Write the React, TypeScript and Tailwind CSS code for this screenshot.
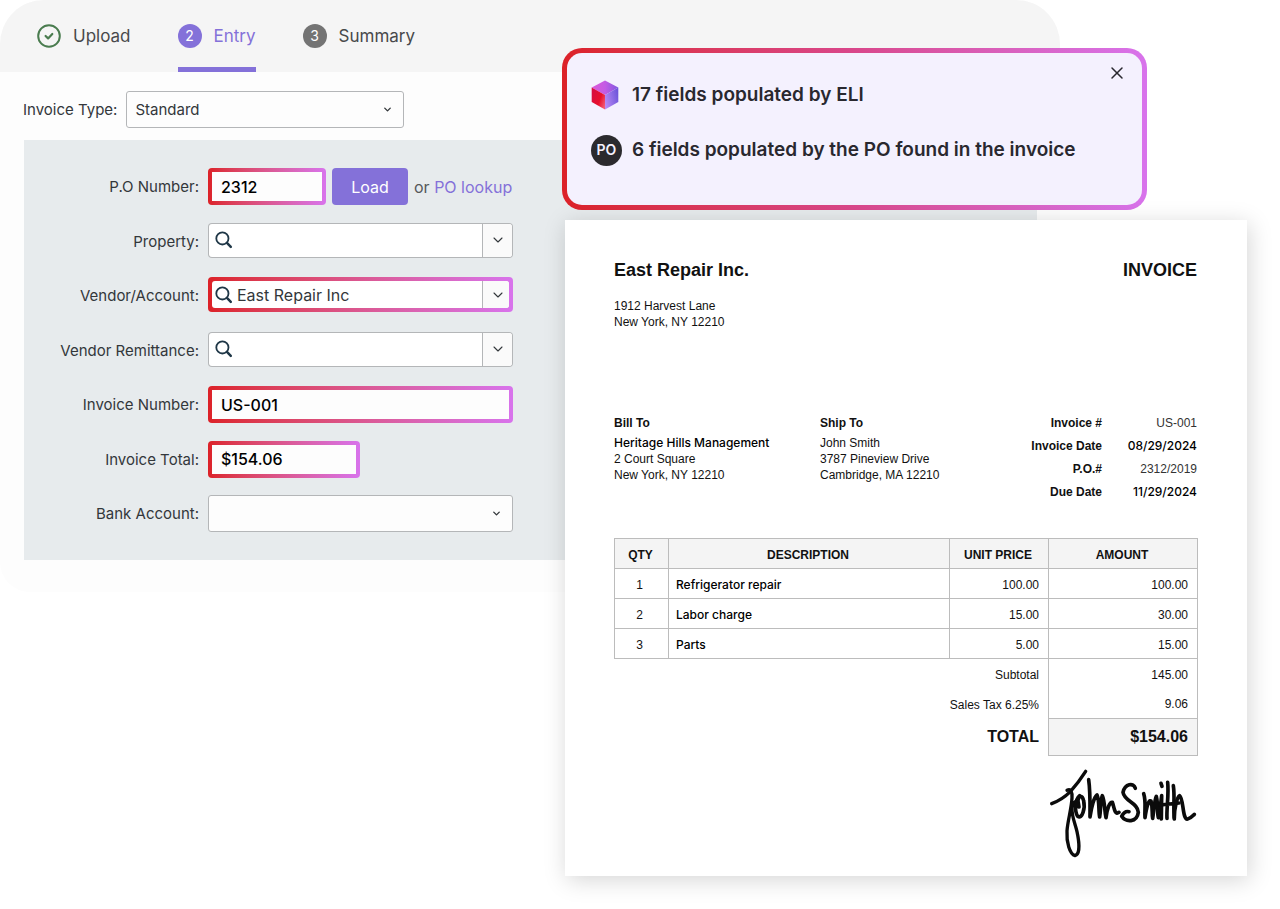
import type { ReactNode } from "react";
import { ChevronDown, X } from "lucide-react";

type FieldProps = { label: string; htmlFor: string; children: ReactNode };

function FormRow({ label, htmlFor, children }: FieldProps) {
  return (
    <div className="flex h-[37px] items-start gap-[9px]">
      <label htmlFor={htmlFor} className="w-[175px] shrink-0 self-center pt-0.5 text-right text-[15px] text-[#33373b]">
        {label}
      </label>
      {children}
    </div>
  );
}

function GradientInput({ id, value, width }: { id: string; value: string; width: string }) {
  return (
    <div className={`h-[37px] rounded bg-gradient-to-r from-[#dc2127] to-[#d873ec] p-1 ${width}`}>
      <input
        id={id}
        defaultValue={value}
        className="h-full w-full bg-[#fdfdfd] px-[9px] text-base font-medium text-black outline-none"
      />
    </div>
  );
}

function SearchIcon() {
  return (
    <svg viewBox="0 0 18 18" className="size-[18px] shrink-0" fill="none" stroke="#1f3747" strokeLinecap="round">
      <circle cx="7.4" cy="7.4" r="6.1" strokeWidth="1.8" />
      <path d="M12.2 12.2 15.8 15.8" strokeWidth="2.5" />
    </svg>
  );
}

function LookupField({ id, value, highlighted }: { id: string; value?: string; highlighted?: boolean }) {
  const frame = highlighted
    ? "bg-gradient-to-r from-[#dc2127] to-[#d873ec] p-1"
    : "bg-[#b4b6b8] p-px";
  const inset = highlighted ? "pl-[3px]" : "pl-1.5";
  const button = highlighted ? "w-[27px] pl-[3px]" : "w-[30px]";
  return (
    <div className={`h-[35px] w-[305px] rounded ${frame}`}>
      <div className="flex h-full overflow-hidden rounded-[3px] bg-white">
        <div className={`flex min-w-0 flex-1 items-center gap-1 ${inset}`}>
          <SearchIcon />
          <input id={id} defaultValue={value} className="w-full min-w-0 bg-transparent text-base text-[#33373b] outline-none" />
        </div>
        <button type="button" aria-label="Show options" className={`flex items-center justify-center border-l border-[#b4b6b8] bg-[#fafafa] ${button}`}>
          <ChevronDown className="size-4 text-[#33373b]" strokeWidth={1.6} />
        </button>
      </div>
    </div>
  );
}

function SelectBox({ id, options, width }: { id: string; options: string[]; width: string }) {
  return (
    <div className={`relative ${width}`}>
      <select
        id={id}
        className="h-[37px] w-full appearance-none rounded-[3px] border border-[#b4b6b8] bg-[#fdfdfd] px-2 pt-0.5 text-[15px] text-[#33373b] outline-none"
      >
        {options.map((option) => (
          <option key={option}>{option}</option>
        ))}
      </select>
      <ChevronDown className="pointer-events-none absolute top-[13px] right-[11px] size-[11px] text-[#33373b]" strokeWidth={3} />
    </div>
  );
}

function Steps() {
  return (
    <nav className="flex h-[72px] gap-[47px] bg-[#f5f5f5] pl-[37px] text-[17px] text-[#48494b]">
      <a href="#upload" className="flex items-center gap-3">
        <svg viewBox="0 0 24 24" className="size-6" fill="none" stroke="#4a7c4f" strokeLinecap="round" strokeLinejoin="round">
          <circle cx="12" cy="12" r="10.8" strokeWidth="2" />
          <path d="m8.6 12 2.5 2.4 4.2-4.4" strokeWidth="2.2" />
        </svg>
        <span className="pt-0.5">Upload</span>
      </a>
      <a href="#entry" aria-current="step" className="flex items-center gap-3 border-y-[5px] border-t-transparent border-b-[#8471d9] text-[#8471d9]">
        <span className="flex size-6 items-center justify-center rounded-full bg-[#8471d9] text-sm text-white">2</span>
        <span className="pt-0.5">Entry</span>
      </a>
      <a href="#summary" className="flex items-center gap-3">
        <span className="flex size-6 items-center justify-center rounded-full bg-[#747474] text-sm text-white">3</span>
        <span className="pt-0.5">Summary</span>
      </a>
    </nav>
  );
}

function EntryWindow() {
  return (
    <section className="z-0 col-span-2 col-start-1 row-start-1 self-start overflow-hidden rounded-t-[44px] rounded-b-[30px] bg-[#fdfdfd] pb-8">
      <Steps />
      <div className="flex items-center gap-[9px] pt-[19px] pb-3 pl-[23px]">
        <label htmlFor="invoice-type" className="pt-0.5 text-[15px] text-[#33373b]">Invoice Type:</label>
        <SelectBox id="invoice-type" options={["Standard"]} width="w-[278px]" />
      </div>
      <form className="mr-[23px] ml-6 flex min-h-[420px] flex-col justify-between bg-[#e7ebed] pt-7 pb-7">
        <FormRow label="P.O Number:" htmlFor="po-number">
          <div className="flex items-center gap-1.5">
            <GradientInput id="po-number" value="2312" width="w-[118px]" />
            <button type="button" className="h-[37px] w-[76px] rounded bg-[#8471d9] text-base text-white">Load</button>
            <span className="text-base text-[#55585b]">
              or <a href="#po-lookup" className="text-[#8471d9]">PO lookup</a>
            </span>
          </div>
        </FormRow>
        <FormRow label="Property:" htmlFor="property">
          <LookupField id="property" />
        </FormRow>
        <FormRow label="Vendor/Account:" htmlFor="vendor">
          <LookupField id="vendor" value="East Repair Inc" highlighted />
        </FormRow>
        <FormRow label="Vendor Remittance:" htmlFor="remittance">
          <LookupField id="remittance" />
        </FormRow>
        <FormRow label="Invoice Number:" htmlFor="invoice-number">
          <GradientInput id="invoice-number" value="US-001" width="w-[305px]" />
        </FormRow>
        <FormRow label="Invoice Total:" htmlFor="invoice-total">
          <GradientInput id="invoice-total" value="$154.06" width="w-[152px]" />
        </FormRow>
        <FormRow label="Bank Account:" htmlFor="bank-account">
          <SelectBox id="bank-account" options={[""]} width="w-[305px]" />
        </FormRow>
      </form>
    </section>
  );
}

function CubeIcon() {
  return (
    <svg viewBox="0 0 28 30" className="h-[30px] w-7">
      <defs>
        <linearGradient id="cube-top" x1="0" y1="0" x2="1" y2="0">
          <stop offset="0" stopColor="#dc5ad8" />
          <stop offset="0.5" stopColor="#c45ce4" />
          <stop offset="1" stopColor="#7f58e0" />
        </linearGradient>
        <linearGradient id="cube-left" x1="0" y1="0.2" x2="1" y2="0.8">
          <stop offset="0" stopColor="#d60c40" />
          <stop offset="0.6" stopColor="#e80f2c" />
          <stop offset="1" stopColor="#f25a74" />
        </linearGradient>
        <linearGradient id="cube-right" x1="0" y1="0.7" x2="1" y2="0.3">
          <stop offset="0" stopColor="#b98af5" />
          <stop offset="1" stopColor="#6d55da" />
        </linearGradient>
      </defs>
      <path d="M14 .5 27.3 7.6 14 15 .7 7.6Z" fill="url(#cube-top)" />
      <path d="M.7 7.6 14 15V29.5L.7 22Z" fill="url(#cube-left)" />
      <path d="M27.3 7.6 14 15V29.5L27.3 22Z" fill="url(#cube-right)" />
    </svg>
  );
}

function Notification() {
  return (
    <div role="status" className="-ml-[3px] w-[585px] rounded-[20px] bg-gradient-to-r from-[#dc2127] via-[#d9478b] to-[#d873ec] p-[5px]">
      <div className="flex h-[152px] rounded-[15px] bg-[#f4f1fe] pt-[27px] pr-[15px] pl-6 text-[19px] font-semibold text-[#29282f]">
        <ul className="flex flex-1 flex-col gap-[25px]">
          <li className="flex h-[30px] items-center gap-[13px]">
            <CubeIcon />
            17 fields populated by ELI
          </li>
          <li className="flex h-[30px] items-center gap-2.5">
            <span className="flex size-[31px] items-center justify-center rounded-full bg-[#2b2a2e] text-sm font-semibold text-[#f4f1fe]">PO</span>
            6 fields populated by the PO found in the invoice
          </li>
        </ul>
        <button type="button" aria-label="Dismiss" className="-mt-[17px] flex size-5 items-center justify-center">
          <X className="size-5" strokeWidth={1.8} />
        </button>
      </div>
    </div>
  );
}

function Signature() {
  return (
    <svg viewBox="27 36 450 276" className="h-[92px] w-[150px]" fill="none" stroke="#0b0b0b" strokeWidth="11" strokeLinecap="round" strokeLinejoin="round" role="img" aria-label="Signature">
      <path d="M38 146C60 138 78 126 94 110C110 92 124 74 140 49" strokeWidth="10" />
      <path d="M84 106C96 100 100 112 99 128C98 160 86 196 84 228C82 262 92 298 108 302C124 298 121 262 114 230C108 204 98 184 99 160C100 148 106 142 112 138" strokeWidth="10" />
      <path d="M122 122C108 134 106 168 116 184C130 194 139 158 134 138C130 118 118 120 117 138L120 156" />
      <path d="M149 74C154 108 153 150 153 186C157 160 164 128 174 120C182 138 178 168 182 186C186 160 184 138 190 122C198 140 196 166 201 188C204 162 212 140 220 142C226 156 226 182 240 172" />
      <path d="M289 100C284 82 258 86 252 112C256 140 296 142 298 172C294 204 260 202 248 184C254 172 262 168 270 170" />
      <path d="M314 116C322 140 316 166 318 188C322 162 328 132 336 138C342 160 338 176 341 190C346 160 346 136 352 124C358 150 354 172 358 188C364 160 366 140 368 122L367 192" />
      <path d="M366 85 369 94M386 82C390 120 382 160 384 190M403 92C408 124 402 160 406 192M364 150 420 144" />
      <path d="M406 188C406 160 414 126 422 122C434 130 430 196 446 192C456 190 460 184 466 178" />
    </svg>
  );
}

const details = [
  { name: "Invoice #", value: "US-001", strong: false },
  { name: "Invoice Date", value: "08/29/2024", strong: true },
  { name: "P.O.#", value: "2312/2019", strong: false },
  { name: "Due Date", value: "11/29/2024", strong: true },
];

const items = [
  { qty: 1, description: "Refrigerator repair", price: "100.00", amount: "100.00" },
  { qty: 2, description: "Labor charge", price: "15.00", amount: "30.00" },
  { qty: 3, description: "Parts", price: "5.00", amount: "15.00" },
];

function Invoice() {
  return (
    <article className="bg-white px-[49px] pt-[38px] pb-[17px] font-['Liberation_Sans',Arial,sans-serif] text-xs text-[#111] shadow-[2px_4px_22px_rgba(0,0,0,0.17)]">
      <header className="flex justify-between pr-px text-lg leading-6 font-bold">
        <h1>East Repair Inc.</h1>
        <h2>INVOICE</h2>
      </header>
      <address className="mt-4 leading-4 not-italic">
        1912 Harvest Lane
        <br />
        New York, NY 12210
      </address>
      <div className="mt-[85px] flex h-[123px] pr-px leading-4">
        <div className="w-[206px]">
          <h3 className="mb-1 font-bold">Bill To</h3>
          <p className="font-['Inter',sans-serif] font-medium text-black">Heritage Hills Management</p>
          <p>2 Court Square</p>
          <p>New York, NY 12210</p>
        </div>
        <div className="flex-1">
          <h3 className="mb-1 font-bold">Ship To</h3>
          <p>John Smith</p>
          <p>3787 Pineview Drive</p>
          <p>Cambridge, MA 12210</p>
        </div>
        <dl className="grid w-[170px] grid-cols-[75px_1fr] content-start gap-y-[7px] text-right">
          {details.map(({ name, value, strong }) => (
            <div key={name} className="col-span-2 grid grid-cols-subgrid">
              <dt className="font-bold whitespace-nowrap">{name}</dt>
              <dd className={strong ? "font-['Inter',sans-serif] font-medium text-black" : "text-[#333]"}>{value}</dd>
            </div>
          ))}
        </dl>
      </div>
      <table className="w-full table-fixed border-collapse">
        <colgroup>
          <col className="w-[54px]" />
          <col />
          <col className="w-[99px]" />
          <col className="w-[149px]" />
        </colgroup>
        <thead>
          <tr className="h-[30px] bg-[#f4f4f4]">
            {["QTY", "DESCRIPTION", "UNIT PRICE", "AMOUNT"].map((heading) => (
              <th key={heading} className="border border-[#bcbcbc] px-0 pt-0.5 pr-0.5 pb-0 font-bold">{heading}</th>
            ))}
          </tr>
        </thead>
        <tbody>
          {items.map(({ qty, description, price, amount }) => (
            <tr key={qty} className="h-[30px]">
              <td className="border border-[#bcbcbc] pt-0.5 pr-1 text-center">{qty}</td>
              <td className="border border-[#bcbcbc] px-[7px] pt-0.5 font-['Inter',sans-serif] font-medium text-black">{description}</td>
              <td className="border border-[#bcbcbc] px-[9px] pt-0.5 text-right">{price}</td>
              <td className="border border-[#bcbcbc] px-[9px] pt-0.5 text-right">{amount}</td>
            </tr>
          ))}
        </tbody>
        <tfoot className="text-right">
          <tr className="h-[30px]">
            <th colSpan={3} scope="row" className="px-[9px] pt-0.5 text-right font-normal">Subtotal</th>
            <td className="border-x border-[#bcbcbc] px-[9px] pt-0.5">145.00</td>
          </tr>
          <tr className="h-[30px]">
            <th colSpan={3} scope="row" className="px-[9px] pt-0.5 text-right font-normal">Sales Tax 6.25%</th>
            <td className="border-x border-[#bcbcbc] px-[9px] pt-0.5">9.06</td>
          </tr>
          <tr className="h-[37px] text-base font-bold">
            <th colSpan={3} scope="row" className="px-[9px] py-0 text-right">TOTAL</th>
            <td className="border border-[#bcbcbc] bg-[#f4f4f4] px-[9px] py-0">$154.06</td>
          </tr>
        </tfoot>
      </table>
      <div className="mt-[11px] flex justify-end">
        <Signature />
      </div>
    </article>
  );
}

export default function App() {
  return (
    <main className="grid min-h-screen grid-cols-[565fr_495fr_220fr] bg-white font-['Inter','Liberation_Sans',sans-serif]">
      <EntryWindow />
      <div className="z-10 col-span-2 col-start-2 row-start-1 flex flex-col gap-[10px] pt-12 pr-[33px] pb-8">
        <Notification />
        <Invoice />
      </div>
    </main>
  );
}
